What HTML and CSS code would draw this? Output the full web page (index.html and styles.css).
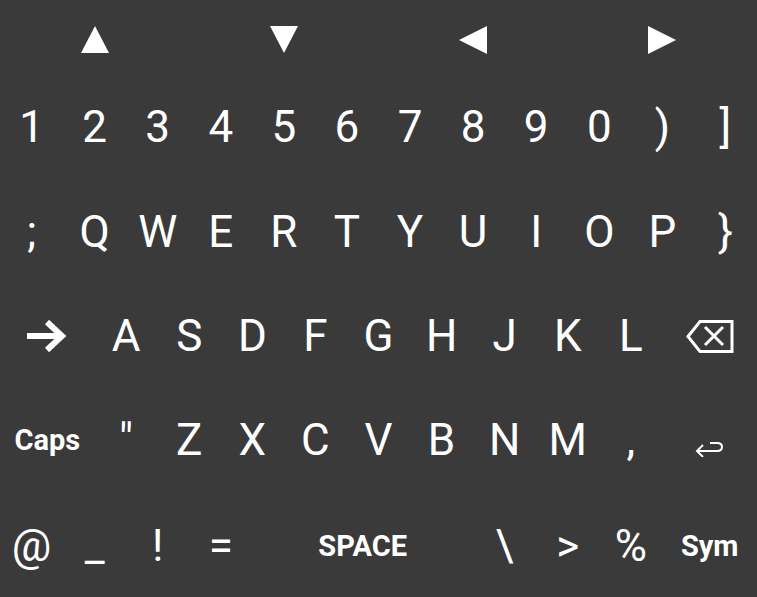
FILE: index.html
```html
<!DOCTYPE html>
<html>
<head>
	<meta charset="utf-8">
	<meta name="viewport" content="width=device-width, initial-scale=1">
	<title>Teclado</title>
	<link rel="stylesheet" href="styles.css">
</head>
<body>
	<div class="keyboard">
		<!-- flechas -->
		<div class="row arrows">
			<div class="key"></div>
			<div class="key"><svg width="28" height="27" viewBox="0 0 28 27"><polygon points="14,0 28,27 0,27" fill="#fff"/></svg></div>
			<div class="key"></div>
			<div class="key"></div>
			<div class="key"><svg width="28" height="27" viewBox="0 0 28 27"><polygon points="0,0 28,0 14,27" fill="#fff"/></svg></div>
			<div class="key"></div>
			<div class="key"></div>
			<div class="key"><svg width="28" height="28" viewBox="0 0 28 28"><polygon points="28,0 28,28 0,14" fill="#fff"/></svg></div>
			<div class="key"></div>
			<div class="key"></div>
			<div class="key"><svg width="28" height="28" viewBox="0 0 28 28"><polygon points="0,0 28,14 0,28" fill="#fff"/></svg></div>
			<div class="key"></div>
		</div>

		<div class="row">
			<div class="key">1</div>
			<div class="key">2</div>
			<div class="key">3</div>
			<div class="key">4</div>
			<div class="key">5</div>
			<div class="key">6</div>
			<div class="key">7</div>
			<div class="key">8</div>
			<div class="key">9</div>
			<div class="key">0</div>
			<div class="key">)</div>
			<div class="key">]</div>
		</div>

		<div class="row">
			<div class="key">;</div>
			<div class="key">Q</div>
			<div class="key">W</div>
			<div class="key">E</div>
			<div class="key">R</div>
			<div class="key">T</div>
			<div class="key">Y</div>
			<div class="key">U</div>
			<div class="key">I</div>
			<div class="key">O</div>
			<div class="key">P</div>
			<div class="key">}</div>
		</div>

		<div class="row">
			<div class="key wide">
				<svg width="42" height="32" viewBox="0 0 42 32"><path d="M1 16 H36 M21 2 L36 16 L21 30" fill="none" stroke="#fff" stroke-width="6"/></svg>
			</div>
			<div class="key">A</div>
			<div class="key">S</div>
			<div class="key">D</div>
			<div class="key">F</div>
			<div class="key">G</div>
			<div class="key">H</div>
			<div class="key">J</div>
			<div class="key">K</div>
			<div class="key">L</div>
			<div class="key wide back">
				<svg width="48" height="34" viewBox="0 0 48 34"><path d="M2 16.5 L14 1.5 H46 V31.5 H14 Z" fill="none" stroke="#fff" stroke-width="3"/><path d="M19 7 L37 25 M37 7 L19 25" stroke="#fff" stroke-width="3"/></svg>
			</div>
		</div>

		<div class="row">
			<div class="key wide label">Caps</div>
			<div class="key">"</div>
			<div class="key">Z</div>
			<div class="key">X</div>
			<div class="key">C</div>
			<div class="key">V</div>
			<div class="key">B</div>
			<div class="key">N</div>
			<div class="key">M</div>
			<div class="key">,</div>
			<div class="key wide enter">
				<svg width="30" height="16" viewBox="0 0 30 16"><path d="M2 10 H22 Q27 10 27 6 Q27 2 22 2 H15 M8 4 L2 10 L8 16" fill="none" stroke="#fff" stroke-width="2"/></svg>
			</div>
		</div>

		<div class="row last">
			<div class="key">@</div>
			<div class="key">_</div>
			<div class="key">!</div>
			<div class="key">=</div>
			<div class="key space label">SPACE</div>
			<div class="key">\</div>
			<div class="key">&gt;</div>
			<div class="key">%</div>
			<div class="key wide label">Sym</div>
		</div>
	</div>
</body>
</html>
```

FILE: styles.css
```css
body{
	margin: 0;
	background-color: #3a3a3a;
	font-family: Roboto, "Noto Sans", sans-serif;
	color: #ffffff;
}

.keyboard{
	display: grid;
	grid-template-rows: 75px repeat(5, 1fr);
	height: 100vh;
}

.row{
	display: grid;
	grid-template-columns: repeat(24, 1fr);
}

.arrows{
	padding-top: 4px;
}

.last{
	padding-top: 3px;
}

.key{
	grid-column: span 2;
	display: flex;
	align-items: center;
	justify-content: center;
	font-size: 44px;
}

.wide{
	grid-column: span 3;
}

.space{
	grid-column: span 7;
}

.label{
	font-size: 29px;
	font-weight: bold;
}

.back svg{
	margin-top: 3px;
}

.enter svg{
	margin-top: 18px;
}
```
